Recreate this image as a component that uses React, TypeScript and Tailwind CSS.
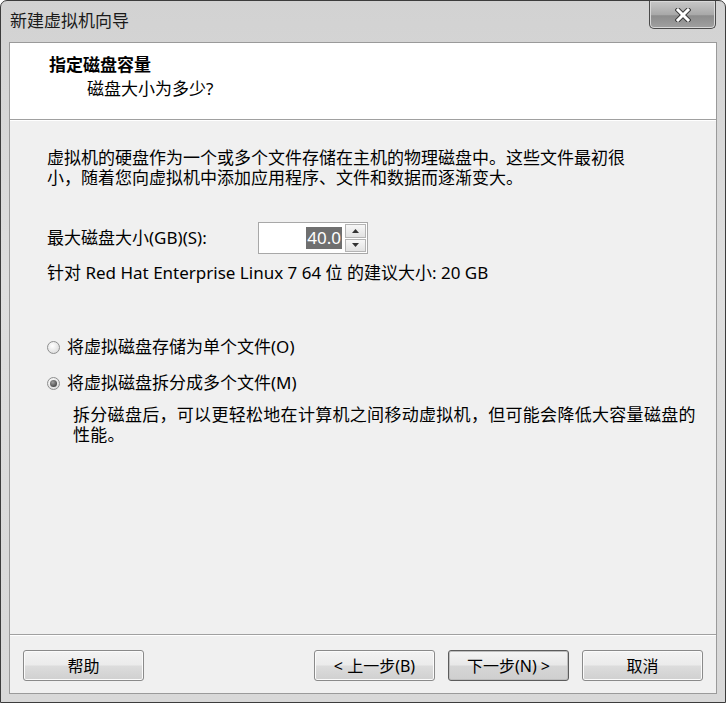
import React from "react";

const font = { fontFamily: '"Noto Sans", "Noto Sans CJK SC", sans-serif' };

const WinButton = ({ label, primary }: { label: string; primary?: boolean }) => (
  <button
    className={`h-[31px] w-[121px] rounded-[3px] border text-[16px] leading-none text-black ${
      primary
        ? "border-[#5c5c5c] shadow-[inset_0_0_0_1px_#bdbdbd] bg-[linear-gradient(to_bottom,#f4f4f4_0%,#e8e8e8_48%,#d6d6d6_52%,#cfcfcf_100%)]"
        : "border-[#8a8a8a] shadow-[inset_0_0_0_1px_#fbfbfb] bg-[linear-gradient(to_bottom,#f3f3f3_0%,#ebebeb_48%,#dcdcdc_52%,#d0d0d0_100%)]"
    }`}
  >
    {label}
  </button>
);

const Radio = ({ checked }: { checked?: boolean }) => (
  <span className="flex h-[13px] w-[13px] items-center justify-center rounded-full border border-[#8e8f8f] bg-[radial-gradient(circle_at_40%_35%,#ffffff,#d4d4d4)]">
    {checked && (
      <span className="h-[7px] w-[7px] rounded-full bg-[radial-gradient(circle_at_40%_35%,#a0a0a0,#2a2a2a)]" />
    )}
  </span>
);

export default function App() {
  return (
    <div
      className="flex h-[703px] w-[726px] flex-col overflow-hidden rounded-t-[7px] border border-[#3c3c3c] bg-[linear-gradient(to_bottom,#d2d2d2,#dedede_40%,#d8d8d8)] text-black"
      style={font}
    >
      {/* title bar */}
      <div className="flex h-[41px] shrink-0 items-start justify-between">
        <div className="pl-[9px] pt-[8px] text-[17px] leading-[24px] text-[#1a1a1a]">新建虚拟机向导</div>
        <div className="mr-[9px] flex h-[28px] w-[67px] items-center justify-center rounded-b-[5px] border border-t-0 border-[#4a4a4a] bg-[linear-gradient(to_bottom,#c8c8c8,#a9a9a9_50%,#8c8c8c_55%,#a0a0a0)] shadow-[inset_0_0_0_1px_#d8d8d8]">
          <svg width="16" height="14" viewBox="0 0 16 14">
            <path d="M3 2 L13 12 M13 2 L3 12" stroke="#3a3a3a" strokeWidth="5" strokeLinecap="square" />
            <path d="M3 2 L13 12 M13 2 L3 12" stroke="#ffffff" strokeWidth="3" strokeLinecap="square" />
          </svg>
        </div>
      </div>

      {/* client area */}
      <div className="mx-[8px] mb-[8px] flex flex-1 flex-col border border-[#9a9a9a] bg-[#f0f0f0]">
        {/* header */}
        <div className="h-[77px] shrink-0 border-b border-[#a0a0a0] bg-white pl-[39px] pt-[10px]">
          <div className="text-[17px] font-bold leading-[24px]">指定磁盘容量</div>
          <div className="pl-[38px] text-[17px] leading-[24px]">磁盘大小为多少?</div>
        </div>
        <div className="h-px bg-white" />

        {/* body */}
        <div className="flex flex-1 flex-col pl-[37px] pt-[27px] text-[17px]">
          <p className="w-[585px] leading-[20px]">
            虚拟机的硬盘作为一个或多个文件存储在主机的物理磁盘中。这些文件最初很小，随着您向虚拟机中添加应用程序、文件和数据而逐渐变大。
          </p>

          <div className="mt-[34px] flex items-center">
            <span className="w-[211px] leading-[24px]">最大磁盘大小(GB)(S):</span>
            <div className="flex h-[32px] w-[110px] items-center border border-[#a8a8a8] bg-white pr-[1px]">
              <div className="flex flex-1 justify-end pr-[3px]">
                <span className="bg-[#6f6f6f] px-[1px] leading-[22px] text-white">40.0</span>
              </div>
              <div className="flex h-[28px] w-[21px] flex-col gap-[1px]">
                <div className="flex flex-1 items-center justify-center border border-[#b4b4b4] bg-[linear-gradient(to_bottom,#f7f7f7,#e2e2e2)]">
                  <svg width="7" height="4" viewBox="0 0 7 4"><path d="M0 4 L3.5 0 L7 4 Z" fill="#333" /></svg>
                </div>
                <div className="flex flex-1 items-center justify-center border border-[#b4b4b4] bg-[linear-gradient(to_bottom,#f7f7f7,#e2e2e2)]">
                  <svg width="7" height="4" viewBox="0 0 7 4"><path d="M0 0 L7 0 L3.5 4 Z" fill="#333" /></svg>
                </div>
              </div>
            </div>
          </div>

          <div className="mt-[7px] leading-[24px]">针对 Red Hat Enterprise Linux 7 64 位 的建议大小: 20 GB</div>

          <div className="mt-[50px] flex items-center gap-[7px] leading-[24px]">
            <Radio />
            <span>将虚拟磁盘存储为单个文件(O)</span>
          </div>
          <div className="mt-[12px] flex items-center gap-[7px] leading-[24px]">
            <Radio checked />
            <span>将虚拟磁盘拆分成多个文件(M)</span>
          </div>
          <p className="mt-[10px] w-[662px] pl-[26px] leading-[20px] tracking-[0.3px]">
            拆分磁盘后，可以更轻松地在计算机之间移动虚拟机，但可能会降低大容量磁盘的性能。
          </p>
        </div>

        {/* footer */}
        <div className="h-px bg-[#a0a0a0]" />
        <div className="h-px bg-white" />
        <div className="flex h-[57px] shrink-0 items-start justify-between px-[13px] pt-[14px]">
          <WinButton label="帮助" />
          <div className="flex gap-[13px]">
            <WinButton label="< 上一步(B)" />
            <WinButton label="下一步(N) >" primary />
            <WinButton label="取消" />
          </div>
        </div>
      </div>
    </div>
  );
}
